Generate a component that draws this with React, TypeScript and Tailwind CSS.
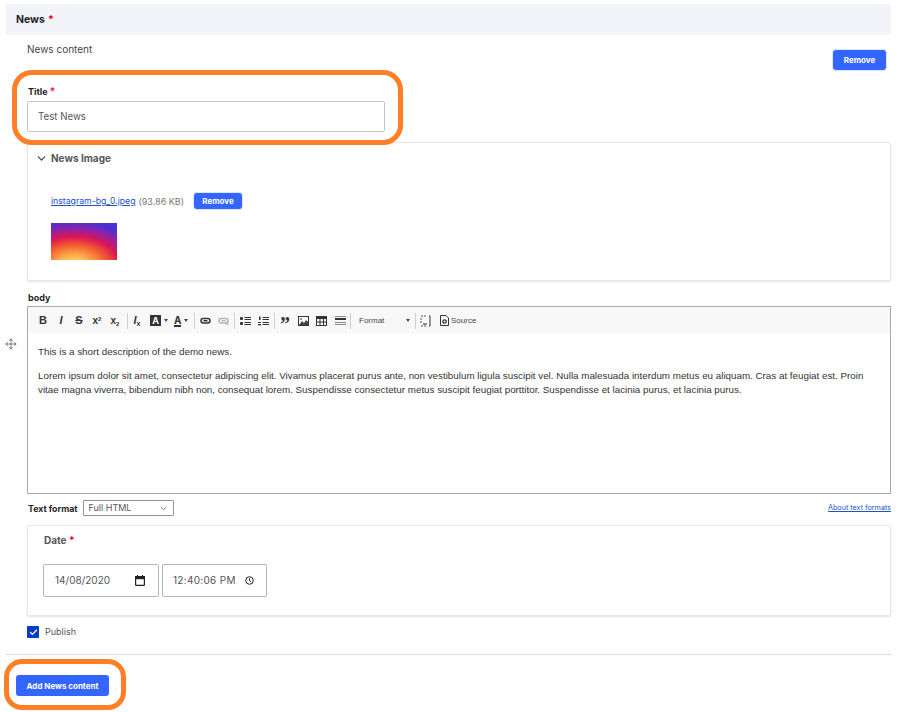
import { ChevronDown, Move, Check } from "lucide-react";

function Sep({ cls }: { cls: string }) {
  return <span className={`h-[16px] w-px bg-[#d0d0d0] ${cls}`} />;
}

function Caret() {
  return <span className="ml-[3px] h-0 w-0 border-x-[2.5px] border-t-[3px] border-x-transparent border-t-[#474747]" />;
}

function Tool({ children, cls = "w-[18px]" }: { children: React.ReactNode; cls?: string }) {
  return <span className={`flex h-[16px] items-center justify-center font-['Liberation_Sans',sans-serif] text-[#333] ${cls}`}>{children}</span>;
}

function Remove({ cls }: { cls: string }) {
  return (
    <button className={`rounded-[3px] bg-[#3366ff] text-[8px] font-bold text-white shadow-[0_0_0_1px_#dbe3ff] ${cls}`}>
      Remove
    </button>
  );
}

function ChainIcon({ color, broken }: { color: string; broken?: boolean }) {
  return (
    <svg width="11" height="8" viewBox="0 0 11 8" fill="none" stroke={color} strokeWidth="1.5">
      <rect x="1" y="1.5" width="9" height="4.5" rx="2.2" />
      <path d="M3.5 3.75 H7.5" />
      {broken ? <path d="M8 5.5 L10.5 8 M10.5 5.5 L8 8" strokeWidth="1" /> : null}
    </svg>
  );
}

export default function App() {
  return (
    <div className="relative h-[712px] w-[902px] overflow-hidden bg-white font-['Inter',sans-serif] text-[#55565b]">
      <div className="ml-[6px] mt-[4px] flex h-[31px] w-[885px] items-center bg-[#f3f4f9] pl-[10px] text-[10.5px] font-bold text-[#232429]">
        News <span className="ml-[3px] text-[#e3002b]">*</span>
      </div>

      <div className="ml-[27px] w-[864px]">
        <div className="flex h-[35px] justify-between">
          <span className="pt-[7px] text-[10px] text-[#45464b]">News content</span>
          <Remove cls="mr-[5px] mt-[15px] h-[20px] w-[53px]" />
        </div>

        <div className="mt-[15px] h-[16px] pl-px text-[9px] font-bold leading-[12px] text-[#232429]">
          Title <span className="text-[11px] font-normal text-[#e3002b]">*</span>
        </div>
        <div className="flex h-[31px] w-[358px] items-center rounded-[2px] border border-[#c4c5cc] pl-[10px] pt-px text-[9.7px] text-[#55565b]">
          Test News
        </div>

        <div className="mt-[10px] h-[139px] rounded-[2px] border border-[#e6e7ea] shadow-[0_1px_2px_rgba(0,0,0,0.12)]">
          <div className="flex items-center pl-[7px] pt-[8px] text-[10px] font-bold text-[#55565b]">
            <ChevronDown size={13} strokeWidth={2.2} className="mr-[3px] text-[#444]" />
            News Image
          </div>
          <div className="ml-[23px] mt-[27px] flex h-[16px] items-center text-[9px]">
            <a className="pt-px text-[8.7px] text-[#2450c8] underline">instagram-bg_0.jpeg</a>
            <span className="ml-[3px] pt-px text-[#77787c]">(93.86 KB)</span>
            <Remove cls="ml-[10px] h-[16px] w-[48px]" />
          </div>
          <div className="ml-[23px] mt-[14px] h-[37px] w-[66px] bg-[radial-gradient(ellipse_105%_118%_at_35%_115%,#ffe27a_0%,#fdb44d_22%,#f4602f_46%,#dc1556_66%,#8d22a8_85%,#4b2fd0_100%)]" />
        </div>

        <div className="mt-[11px] h-[14px] pl-px text-[9px] font-bold leading-[11px] text-[#232429]">body</div>
        <div className="h-[188px] border border-[#a9a9ad]">
          <div className="flex h-[27px] items-center bg-[#f8f8f8] pl-[6px]">
            <Tool><span className="text-[11px] font-bold">B</span></Tool>
            <Tool><span className="text-[11px] font-bold italic">I</span></Tool>
            <Tool><span className="text-[11px] font-bold line-through">S</span></Tool>
            <Tool><span className="text-[10px] font-bold">x<sup className="text-[6px]">2</sup></span></Tool>
            <Tool><span className="text-[10px] font-bold">x<sub className="text-[6px]">2</sub></span></Tool>
            <Sep cls="mx-[2.5px]" />
            <Tool cls="w-[14px]"><span className="text-[11px] font-bold italic">I<sub className="text-[7px] not-italic">x</sub></span></Tool>
            <span className="ml-[6px] flex w-[20px] items-center">
              <span className="flex h-[11px] w-[11px] items-center justify-center bg-[#333] text-[9px] font-bold text-white">A</span>
              <Caret />
            </span>
            <span className="ml-[4px] flex w-[17px] items-center">
              <span className="border-b-2 border-[#333] text-[10px] font-bold leading-[10px] text-[#333]">A</span>
              <Caret />
            </span>
            <Sep cls="mx-[2.5px]" />
            <Tool cls="w-[16px]"><ChainIcon color="#333" /></Tool>
            <Tool cls="ml-px w-[18px]"><ChainIcon color="#b5b5b5" broken /></Tool>
            <Sep cls="mx-[2px]" />
            <Tool cls="w-[16px]">
              <svg width="11" height="10" viewBox="0 0 11 10" fill="#333">
                <rect x="0" y="1" width="3" height="3" rx="1" />
                <rect x="0" y="6" width="3" height="3" rx="1" />
                <rect x="4.5" y="1" width="6.5" height="1" />
                <rect x="4.5" y="3" width="6.5" height="1" />
                <rect x="4.5" y="6" width="6.5" height="1" />
                <rect x="4.5" y="8" width="6.5" height="1" />
              </svg>
            </Tool>
            <Tool cls="ml-px w-[18px]">
              <svg width="11" height="10" viewBox="0 0 11 10" fill="#333">
                <rect x="1" y="0.5" width="1.5" height="3.5" />
                <rect x="0" y="6" width="3" height="1" />
                <rect x="0" y="8" width="3" height="1.3" />
                <rect x="4.5" y="1" width="6.5" height="1" />
                <rect x="4.5" y="3" width="6.5" height="1" />
                <rect x="4.5" y="6" width="6.5" height="1" />
                <rect x="4.5" y="8" width="6.5" height="1" />
              </svg>
            </Tool>
            <Sep cls="mx-[2px]" />
            <Tool cls="w-[16px]"><span className="pt-[7px] font-['Liberation_Serif',serif] text-[20px] font-bold leading-[14px]">”</span></Tool>
            <Tool cls="ml-px w-[18px]">
              <svg width="11" height="10" viewBox="0 0 11 10">
                <rect x="0.5" y="0.5" width="10" height="9" fill="#fff" stroke="#333" />
                <path d="M1 9 L4 5 L6 7 L8 4 L10 6 V9 Z" fill="#444" />
                <circle cx="3" cy="3" r="1" fill="#666" />
              </svg>
            </Tool>
            <Tool>
              <svg width="11" height="10" viewBox="0 0 11 10" fill="none" stroke="#333">
                <rect x="0.5" y="0.5" width="10" height="9" />
                <rect x="0.5" y="0.5" width="10" height="2" fill="#333" />
                <path d="M4 3 V9 M7.5 3 V9 M1 6 H10" />
              </svg>
            </Tool>
            <Tool cls="ml-px w-[18px]">
              <span className="flex w-[11px] flex-col gap-[1.5px]">
                <span className="h-px bg-[#888]" />
                <span className="h-[2px] bg-[#333]" />
                <span className="h-px bg-[#888]" />
                <span className="h-px bg-[#888]" />
              </span>
            </Tool>
            <Sep cls="ml-px mr-[2px]" />
            <span className="ml-[6px] flex w-[51px] items-center justify-between font-['Liberation_Sans',sans-serif] text-[8px] text-[#484848]">
              Format
              <Caret />
            </span>
            <Sep cls="ml-[5px] mr-[2px]" />
            <Tool cls="w-[14px]">
              <svg width="11" height="12" viewBox="0 0 11 12" fill="none" stroke="#555">
                <path d="M1 1 H7 M1 11 H7 M1 3 V9" strokeDasharray="2 1" />
                <path d="M9 1 H10 V11 H9" stroke="#333" />
                <rect x="3" y="8" width="4" height="2" fill="#888" stroke="none" />
              </svg>
            </Tool>
            <span className="ml-[8px] flex items-center font-['Liberation_Sans',sans-serif] text-[8px] text-[#484848]">
              <svg width="9" height="11" viewBox="0 0 9 11" fill="none" stroke="#333" className="mr-[2px]">
                <path d="M0.5 0.5 H6 L8.5 3 V10.5 H0.5 Z" />
                <circle cx="4.5" cy="6.5" r="1.7" strokeWidth="1.3" />
              </svg>
              Source
            </span>
          </div>
          <div className="pl-[10px] pr-[18px] pt-[11px] font-['Liberation_Sans',sans-serif] text-[9.8px] leading-[14px] text-[#333]">
            <p>This is a short description of the demo news.</p>
            <p className="mt-[10px]">
              Lorem ipsum dolor sit amet, consectetur adipiscing elit. Vivamus placerat purus ante, non vestibulum ligula suscipit vel. Nulla malesuada interdum metus eu aliquam. Cras at feugiat est. Proin vitae magna viverra, bibendum nibh non, consequat lorem. Suspendisse consectetur metus suscipit feugiat porttitor. Suspendisse et lacinia purus, et lacinia purus.
            </p>
          </div>
        </div>

        <div className="mt-[6px] flex h-[16px] items-center pl-px">
          <span className="pt-px text-[8.8px] font-bold text-[#232429]">Text format</span>
          <span className="ml-[5px] flex h-[16px] w-[91px] items-center justify-between rounded-[1px] border border-[#919297] px-[5px] text-[9px] text-[#55565b]">
            Full HTML
            <ChevronDown size={9} />
          </span>
          <a className="ml-auto text-[7.2px] text-[#2450c8] underline">About text formats</a>
        </div>

        <div className="mt-[9px] h-[91px] rounded-[2px] border border-[#e6e7ea] pl-[15px] pt-[7px] shadow-[0_1px_2px_rgba(0,0,0,0.12)]">
          <div className="pl-px text-[10px] font-bold text-[#55565b]">
            Date <span className="text-[#e3002b]">*</span>
          </div>
          <div className="mt-[16px] flex gap-[3px]">
            <span className="flex h-[33px] w-[116px] items-center justify-between rounded-[2px] border border-[#b4b5bb] pl-[11px] pr-[13px] text-[10px] text-[#55565b]">
              14/08/2020
              <svg width="10" height="11" viewBox="0 0 10 11" fill="none" stroke="#222" strokeWidth="1.2">
                <rect x="0.6" y="1.6" width="8.8" height="8.8" rx="0.6" />
                <rect x="0.6" y="1.6" width="8.8" height="2" fill="#222" />
                <path d="M2.5 0 V2 M7.5 0 V2" />
              </svg>
            </span>
            <span className="flex h-[33px] w-[105px] items-center justify-between rounded-[2px] border border-[#b4b5bb] pl-[10px] pr-[12px] text-[10px] tracking-[0.3px] text-[#55565b]">
              12:40:06 PM
              <svg width="9" height="9" viewBox="0 0 9 9" fill="none" stroke="#222" strokeWidth="1">
                <circle cx="4.5" cy="4.5" r="3.8" />
                <path d="M4.5 2.3 V4.7 L6 5.7" />
              </svg>
            </span>
          </div>
        </div>

        <div className="mt-[10px] flex h-[12px] items-center text-[9px]">
          <span className="flex h-[12px] w-[12px] items-center justify-center rounded-[1px] bg-[#003cc5]">
            <Check size={9} strokeWidth={3.5} className="text-white" />
          </span>
          <span className="ml-[6px] text-[#55565b]">Publish</span>
        </div>
      </div>

      <div className="ml-[6px] mt-[16px] h-px w-[885px] bg-[#d8d9dd]" />
      <button className="ml-[16px] mt-[20px] h-[21px] w-[93px] rounded-[3px] bg-[#3366ff] text-[8px] font-bold text-white">
        Add News content
      </button>

      <span className="absolute left-[5px] top-[338px] text-[#55565b]"><Move size={12} strokeWidth={1.5} /></span>
      <div className="absolute left-[12px] top-[70px] h-[75px] w-[391px] rounded-[20px] border-[5px] border-[#ff7f27]" />
      <div className="absolute left-[4px] top-[659px] h-[51px] w-[122px] rounded-[18px] border-[5px] border-[#ff7f27]" />
    </div>
  );
}
